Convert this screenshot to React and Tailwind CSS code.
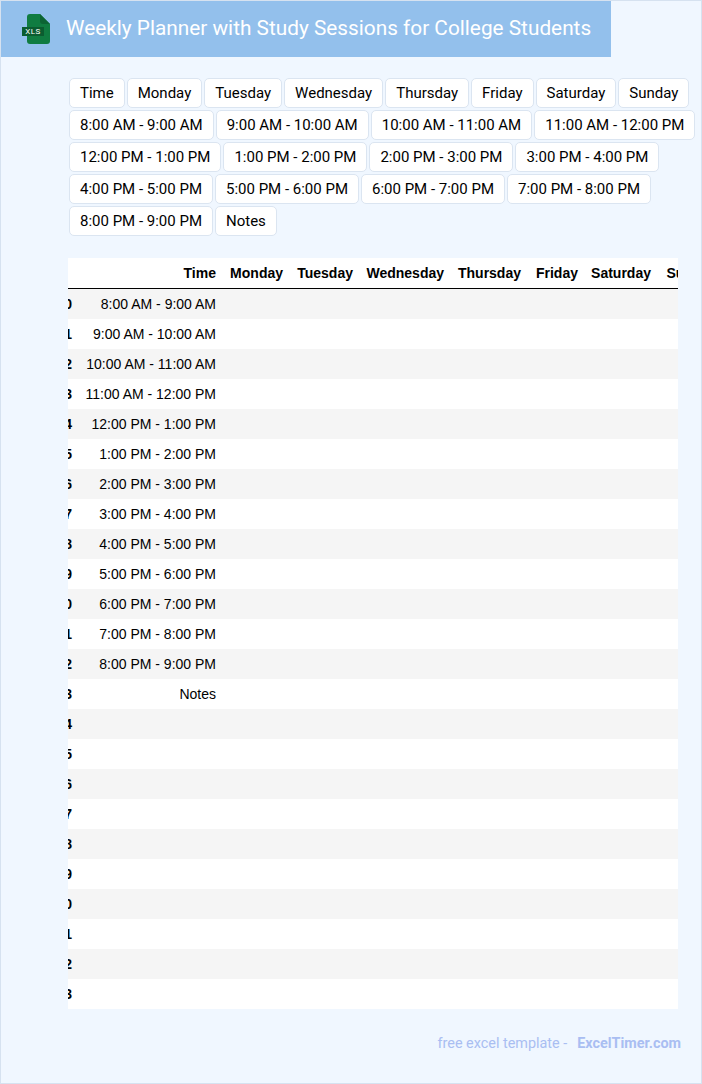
const TAGS = [
  'Time', 'Monday', 'Tuesday', 'Wednesday', 'Thursday', 'Friday', 'Saturday', 'Sunday',
  '8:00 AM - 9:00 AM', '9:00 AM - 10:00 AM', '10:00 AM - 11:00 AM', '11:00 AM - 12:00 PM',
  '12:00 PM - 1:00 PM', '1:00 PM - 2:00 PM', '2:00 PM - 3:00 PM', '3:00 PM - 4:00 PM',
  '4:00 PM - 5:00 PM', '5:00 PM - 6:00 PM', '6:00 PM - 7:00 PM', '7:00 PM - 8:00 PM',
  '8:00 PM - 9:00 PM', 'Notes',
]

const DAYS = [
  ['Monday', 'w-[67px]'],
  ['Tuesday', 'w-[70px]'],
  ['Wednesday', 'w-[91px]'],
  ['Thursday', 'w-[77px]'],
  ['Friday', 'w-[57px]'],
  ['Saturday', 'w-[73px]'],
  ['Sunday', 'w-[66px]'],
]

const TIMES = TAGS.slice(8)
const ROWS = Array.from({ length: 24 }, (_, i) => TIMES[i] || '')

function XlsIcon() {
  return (
    <svg width="28" height="30" viewBox="0 0 28 30" className="shrink-0">
      <path d="M8 0h10l10 10v17a3 3 0 0 1-3 3H8a3 3 0 0 1-3-3V3a3 3 0 0 1 3-3z" fill="#107c41" />
      <path d="M18 0l10 10h-7a3 3 0 0 1-3-3z" fill="#0c6434" />
      <rect x="0" y="13" width="22" height="9" fill="#0b5c30" />
      <text x="11" y="20" textAnchor="middle" fill="#ffffff" fontSize="8" fontFamily="Roboto, sans-serif" letterSpacing="0.5">XLS</text>
    </svg>
  )
}

export default function App() {
  return (
    <div className="h-[1084px] border border-[#d6e2f0] bg-[#f0f7ff] font-['Roboto',sans-serif]">
      <header className="flex h-14 w-[610px] items-center gap-4 bg-[#93c0ec] pl-[21px]">
        <XlsIcon />
        <h1 className="pb-px text-[20.8px] font-normal text-white">Weekly Planner with Study Sessions for College Students</h1>
      </header>

      <div className="ml-[68px] mt-[21px] flex flex-wrap gap-0.5">
        {TAGS.map((tag, i) => (
          <span
            key={i}
            className="h-[30px] rounded-[5px] border border-[#dbe5f1] bg-white px-2.5 text-[15px] leading-[28px] text-black"
          >
            {tag}
          </span>
        ))}
      </div>

      <div className="ml-[67px] mt-[22px] h-[751px] w-[610px] overflow-hidden bg-white">
        <table className="-ml-[31px] w-[687px] max-w-none table-fixed border-separate border-spacing-0 font-['Liberation_Sans',sans-serif] text-sm text-black">
          <thead>
            <tr className="h-[31px]">
              <th className="w-[37px] border-b border-black pr-[2px]"></th>
              <th className="w-[149px] border-b border-black pr-[7px] text-right font-bold">Time</th>
              {DAYS.map(([day, width]) => (
                <th key={day} className={`${width} border-b border-black pr-[7px] text-right font-bold whitespace-nowrap`}>{day}</th>
              ))}
            </tr>
          </thead>
          <tbody>
            {ROWS.map((time, i) => (
              <tr key={i} className="h-[30px] odd:bg-[#f5f5f5] even:bg-white">
                <th className="pr-[2px] text-right font-bold">{i}</th>
                <td className="pr-[7px] text-right whitespace-nowrap">{time}</td>
                {DAYS.map(([day]) => (
                  <td key={day}></td>
                ))}
              </tr>
            ))}
          </tbody>
        </table>
      </div>

      <footer className="mr-5 mt-[25px] flex justify-end gap-2.5 text-[14.4px] leading-5 text-[#a9bef2]">
        <span>free excel template -</span>
        <span className="font-bold">ExcelTimer.com</span>
      </footer>
    </div>
  )
}
